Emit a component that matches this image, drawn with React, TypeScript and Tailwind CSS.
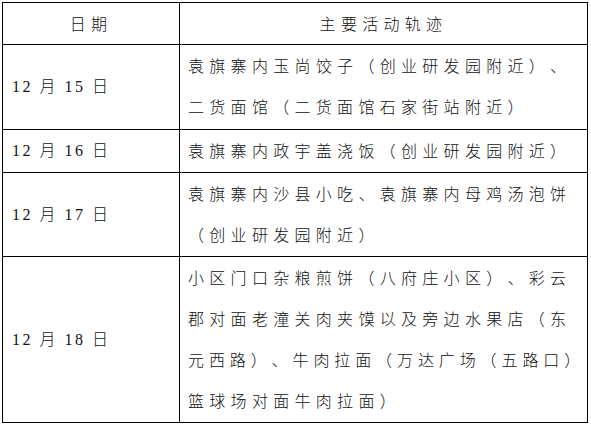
const font = {
  fontFamily: '"Liberation Serif", "Noto Sans CJK SC", serif',
};

type Row = { date: string; lines: string[]; h: string };

const rows: Row[] = [
  {
    date: "12 月 15 日",
    lines: ["袁旗寨内玉尚饺子（创业研发园附近）、", "二货面馆（二货面馆石家街站附近）"],
    h: "h-[85px]",
  },
  {
    date: "12 月 16 日",
    lines: ["袁旗寨内政宇盖浇饭（创业研发园附近）"],
    h: "h-[43px]",
  },
  {
    date: "12 月 17 日",
    lines: ["袁旗寨内沙县小吃、袁旗寨内母鸡汤泡饼", "（创业研发园附近）"],
    h: "h-[84px]",
  },
  {
    date: "12 月 18 日",
    lines: [
      "小区门口杂粮煎饼（八府庄小区）、彩云",
      "郡对面老潼关肉夹馍以及旁边水果店（东",
      "元西路）、牛肉拉面（万达广场（五路口）",
      "篮球场对面牛肉拉面）",
    ],
    h: "h-[166px]",
  },
];

export default function App() {
  return (
    <div
      className="w-[591px] h-[425px] bg-white pt-[2px] pl-[2px] text-[#111] [text-spacing-trim:space-all]"
      style={font}
    >
      <table className="w-[586px] table-fixed border-collapse text-[16px] font-light">
        <colgroup>
          <col className="w-[177px]" />
          <col />
        </colgroup>
        <thead>
          <tr className="h-[42px]">
            <th className="border border-black font-light tracking-[5.3px] text-center align-middle pt-[3px]">
              日期
            </th>
            <th className="border border-black font-light tracking-[5.3px] text-center align-middle pt-[3px]">
              主要活动轨迹
            </th>
          </tr>
        </thead>
        <tbody>
          {rows.map((r) => (
            <tr key={r.date} className={r.h}>
              <td className="border border-black pl-[9px] align-middle tracking-[2.5px] whitespace-nowrap">
                {r.date}
              </td>
              <td className="border border-black pl-[8px] pr-0 align-middle leading-[41px] tracking-[5.3px] whitespace-nowrap">
                {r.lines.map((l, i) => (
                  <div key={i} className={l.length > 18 ? "tracking-[4.9px]" : ""}>
                    {l}
                  </div>
                ))}
              </td>
            </tr>
          ))}
        </tbody>
      </table>
    </div>
  );
}
